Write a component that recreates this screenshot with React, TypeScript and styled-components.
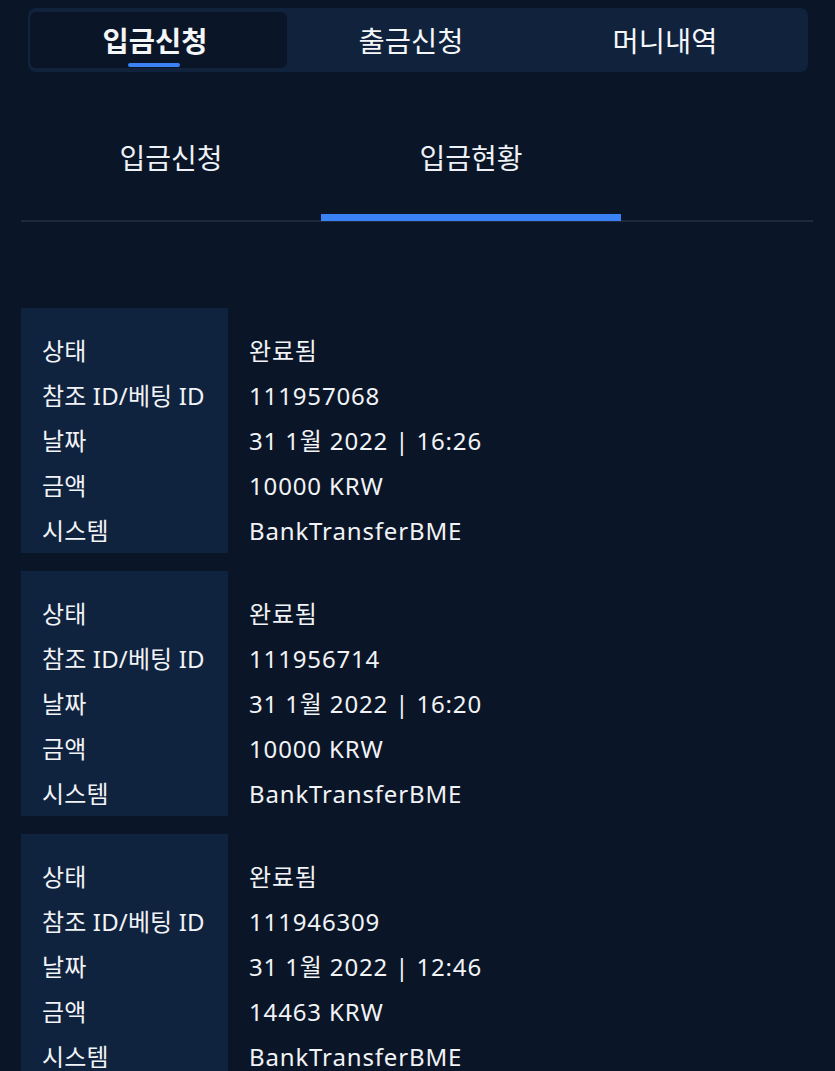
import React from "react";
import styled, { createGlobalStyle } from "styled-components";

const Global = createGlobalStyle`
  html, body { margin: 0; padding: 0; background: #0a1628; }
  body { font-family: "Noto Sans", "Noto Sans CJK KR", sans-serif; color: #f2f4f7; }
`;

const Page = styled.div`
  width: 835px;
  min-height: 1071px;
  background: #0a1628;
  padding-top: 8px;
  box-sizing: border-box;
  overflow: hidden;
`;

const TopBar = styled.div`
  margin: 0 27px 0 28px;
  height: 64px;
  background: #10223c;
  border-radius: 8px;
  padding: 4px 2px;
  box-sizing: border-box;
  display: grid;
  grid-template-columns: 257px 254px 254px;
`;

const TopTab = styled.div<{ $active?: boolean }>`
  position: relative;
  display: flex;
  align-items: center;
  justify-content: center;
  border-radius: 6px;
  background: ${(p) => (p.$active ? "#0a1628" : "transparent")};
  font-family: "Noto Sans CJK KR", sans-serif;
  font-size: 28.5px;
  font-weight: ${(p) => (p.$active ? 700 : 400)};
  color: #f4f6f8;
  padding-bottom: 2px;
  padding-right: ${(p) => (p.$active ? "7px" : "0")};
  margin-left: ${(p) => (p.$active ? "0" : "-6px")};
`;

const TopIndicator = styled.span`
  position: absolute;
  left: 98px;
  bottom: 1px;
  width: 52px;
  height: 4px;
  border-radius: 2px;
  background: #3b82f6;
`;

const SubTabs = styled.div`
  margin: 0 22px 0 21px;
  display: flex;
  border-bottom: 2px solid #1d2a3b;
`;

const SubTab = styled.div<{ $active?: boolean }>`
  position: relative;
  width: 300px;
  height: 148px;
  padding-top: 65px;
  box-sizing: border-box;
  display: flex;
  justify-content: center;
  align-items: flex-start;
  font-family: "Noto Sans CJK KR", sans-serif;
  font-size: 28px;
  color: #eef1f5;
  line-height: 40px;
  ${(p) =>
    p.$active &&
    `&::after { content: ""; position: absolute; left: 0; right: 0; bottom: -1px; height: 7px; background: #3b82f6; }`}
`;

const List = styled.div`
  margin: 86px 0 0 21px;
  display: flex;
  flex-direction: column;
  gap: 18px;
`;

const Card = styled.div`
  display: grid;
  grid-template-columns: 207px 1fr;
`;

const LabelCol = styled.div`
  background: #0f223e;
  padding: 20px 0 0 21px;
  display: flex;
  flex-direction: column;
`;

const ValueCol = styled.div`
  padding: 20px 0 0 21px;
  display: flex;
  flex-direction: column;
`;

const Cell = styled.div<{ $value?: boolean }>`
  height: 45px;
  line-height: 45px;
  font-size: 24px;
  letter-spacing: ${(p) => (p.$value ? "0.85px" : "0.15px")};
  color: #f1f3f6;
  white-space: nowrap;
  font-family: "Noto Sans", "Noto Sans CJK KR", sans-serif;
`;

type Item = { id: string; date: string; amount: string };

const items: Item[] = [
  { id: "111957068", date: "31 1월 2022 | 16:26", amount: "10000 KRW" },
  { id: "111956714", date: "31 1월 2022 | 16:20", amount: "10000 KRW" },
  { id: "111946309", date: "31 1월 2022 | 12:46", amount: "14463 KRW" },
];

const labels = ["상태", "참조 ID/베팅 ID", "날짜", "금액", "시스템"];

export default function App() {
  return (
    <Page>
      <Global />
      <TopBar>
        <TopTab $active>
          입금신청
          <TopIndicator />
        </TopTab>
        <TopTab>출금신청</TopTab>
        <TopTab>머니내역</TopTab>
      </TopBar>
      <SubTabs>
        <SubTab>입금신청</SubTab>
        <SubTab $active>입금현황</SubTab>
      </SubTabs>
      <List>
        {items.map((it) => (
          <Card key={it.id}>
            <LabelCol>
              {labels.map((l) => (
                <Cell key={l}>{l}</Cell>
              ))}
            </LabelCol>
            <ValueCol>
              <Cell $value>완료됨</Cell>
              <Cell $value>{it.id}</Cell>
              <Cell $value>{it.date}</Cell>
              <Cell $value>{it.amount}</Cell>
              <Cell $value>BankTransferBME</Cell>
            </ValueCol>
          </Card>
        ))}
      </List>
    </Page>
  );
}
